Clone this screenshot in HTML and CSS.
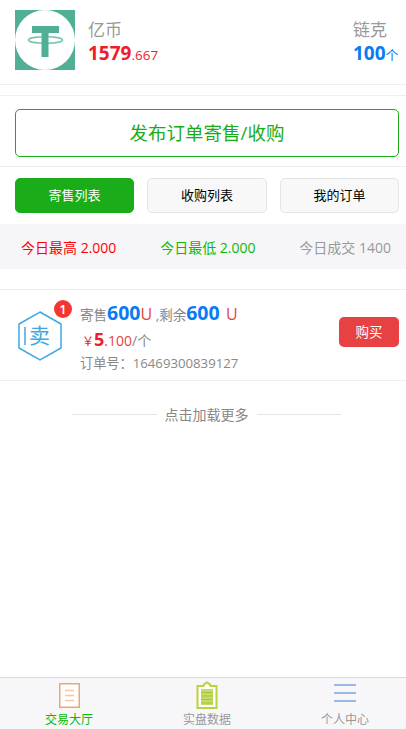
FILE: index.html
```html
<!DOCTYPE html>
<html lang="zh">
<head>
<meta charset="utf-8">
<title>交易大厅</title>
<link rel="stylesheet" href="styles.css">
</head>
<body>
<div class="page">
  <header class="top">
    <svg class="logo" viewBox="0 0 60 60" aria-hidden="true">
      <rect width="60" height="60" fill="#50af95"/>
      <circle cx="30" cy="30" r="30" fill="#fff"/>
      <ellipse cx="30.500" cy="30" rx="17" ry="3.200" fill="none" stroke="#7fc4b1" stroke-width="1.500"/>
      <path d="M17 16h27v7h-10.500v24h-7V23H17z" fill="#50af95"/>
    </svg>
    <div class="coin">
      <div class="label">亿币</div>
      <div class="value red"><b>1579</b><small>.667</small></div>
    </div>
    <div class="chain">
      <div class="label">链克</div>
      <div class="value blue"><b>100</b><small class="unit">个</small></div>
    </div>
  </header>
  <div class="gap"></div>
  <section class="publish-wrap">
    <a class="publish">发布订单寄售/收购</a>
  </section>
  <nav class="tabs">
    <a class="tab active">寄售列表</a>
    <a class="tab">收购列表</a>
    <a class="tab">我的订单</a>
  </nav>
  <section class="stats">
    <span class="st-red">今日最高 2.000</span>
    <span class="st-green">今日最低 2.000</span>
    <span class="st-gray">今日成交 1400</span>
  </section>
  <article class="order">
    <div class="hex-wrap">
      <svg class="hex" viewBox="0 0 44 50" aria-hidden="true">
        <path d="M22 1 43 13V37L22 49 1 37V13z" fill="none" stroke="#3ea9e2" stroke-width="1.500"/>
        <path d="M7 16v18" stroke="#3ea9e2" stroke-width="1.500"/>
      </svg>
      <span class="hex-text">卖</span>
      <span class="badge">1</span>
    </div>
    <div class="info">
      <div class="l1">寄售<b>600</b><span class="u">U</span> ,剩余<b>600</b> <span class="u last">U</span></div>
      <div class="l2"><span class="yen">￥</span><b>5</b><span class="dec">.100</span>/个</div>
      <div class="l3">订单号：16469300839127</div>
    </div>
    <a class="buy">购买</a>
  </article>
  <div class="more"><i></i><span>点击加载更多</span><i></i></div>
  <div class="spacer"></div>
  <footer class="bar">
    <a class="item on">
      <svg class="ic" viewBox="0 0 30 30" aria-hidden="true">
        <rect x="5.750" y="2.750" width="19.500" height="23.500" fill="#fff" stroke="#e8a878" stroke-width="1.500"/>
        <path d="M11 9.500h9M11 14.500h9M11 19.500h9" stroke="#f5c8a0" stroke-width="1.500"/>
      </svg>
      <span>交易大厅</span>
    </a>
    <a class="item">
      <svg class="ic" viewBox="0 0 30 30" aria-hidden="true">
        <path d="M11.500 5 12 3.500 15 1.500 18 3.500 18.500 5h6v22h-19V5z" fill="#fff" stroke="#b9d33c" stroke-width="2"/>
        <path d="M9 8h12v16H9z" fill="#c5dc6a"/>
        <path d="M9 11.500h12M9 15h12M9 18.500h12M9 22h12" stroke="#a9c52f" stroke-width="1"/>
      </svg>
      <span>实盘数据</span>
    </a>
    <a class="item">
      <svg class="ic" viewBox="0 0 30 30" aria-hidden="true">
        <path d="M4 4h22M4 12h22M4 20h22" stroke="#9db8e0" stroke-width="2"/>
      </svg>
      <span>个人中心</span>
    </a>
  </footer>
</div>
</body>
</html>
```

FILE: styles.css
```css
* { box-sizing: border-box; }
html, body { margin: 0; height: 100%; }
body {
  background: #fff;
  font-family: "Open Sans", "Noto Sans CJK SC", sans-serif;
  color: #333;
}
a { display: block; }
.page { display: flex; flex-direction: column; height: 729px; overflow: hidden; }

.top {
  display: flex;
  align-items: flex-start;
  height: 85px;
  padding: 10px 7px 0 15px;
  border-bottom: 1px solid #eee;
}
.logo { width: 60px; height: 60px; flex: none; }
.coin { margin-left: 13px; flex: 1; }
.label { font-size: 17px; line-height: 22px; color: #999; margin-top: 9px; }
.value { line-height: 24px; font-size: 14px; white-space: nowrap; }
.value b { font-size: 19px; font-weight: 700; }
.value small { font-size: 13.500px; }
.value .unit { font-size: 13px; }
.red { color: #f01c2c; }
.blue { color: #0a7bf5; }
.chain { width: 46px; }

.gap { height: 10px; }
.publish-wrap { padding: 13px 7px 9px 15px; border-top: 1px solid #eee; border-bottom: 1px solid #eee; }
.publish {
  height: 48px;
  line-height: 46px;
  border: 1px solid #1aad19;
  border-radius: 5px;
  text-align: center;
  font-size: 18.500px;
  color: #1aad19;
}

.tabs { display: flex; gap: 13.400px; padding: 11px 7px 11px 15px; }
.tab {
  flex: 1;
  height: 35px;
  line-height: 33px;
  border: 1px solid #e5e5e5;
  border-radius: 5px;
  background: #f8f8f8;
  text-align: center;
  font-size: 13px;
  color: #000;
}
.tab.active { background: #1aad19; border-color: #1aad19; color: #fff; }

.stats {
  display: flex;
  justify-content: space-between;
  align-items: center;
  height: 45px;
  padding: 0 15px 0 21px;
  background: #f6f6f8;
  font-size: 14px;
}
.st-red { color: #f00; }
.st-green { color: #09bb07; }
.st-gray { color: #999; }

.order {
  display: flex;
  align-items: center;
  height: 92px;
  margin-top: 20px;
  padding: 0 7px 0 18px;
  border-top: 1px solid #eee;
  border-bottom: 1px solid #eee;
}
.hex-wrap { position: relative; width: 44px; height: 50px; flex: none; margin-top: 2px; }
.hex { width: 44px; height: 50px; display: block; }
.hex-text {
  position: absolute;
  left: 11px;
  top: 10px;
  font-size: 21px;
  line-height: 28px;
  color: #3ea9e2;
}
.badge {
  position: absolute;
  left: 36px;
  top: -11px;
  width: 18px;
  height: 18px;
  border-radius: 50%;
  background: #f43530;
  color: #fff;
  font-size: 13px;
  font-weight: 600;
  line-height: 18px;
  text-align: center;
}
.info { flex: 1; margin-left: 18px; padding-top: 3px; color: #888; font-size: 13.500px; }
.l1 { line-height: 24px; white-space: nowrap; }
.l1 b { font-size: 19.500px; font-weight: 700; color: #0a7bf5; }
.u { font-size: 16px; color: #e64340; }
.u.last { margin-left: 3px; }
.l2 { line-height: 24px; padding-left: 2px; font-size: 14px; }
.l2 b { font-size: 18px; color: #f01c2c; }
.yen { color: #f01c2c; font-size: 12px; }
.dec { color: #e64340; }
.l3 { line-height: 20px; font-size: 13.200px; margin-top: -1px; }
.buy {
  width: 60px;
  height: 30px;
  line-height: 30px;
  border-radius: 5px;
  background: #e84142;
  color: #fff;
  text-align: center;
  font-size: 13.500px;
  flex: none;
  margin-bottom: 6px;
}

.more {
  display: flex;
  align-items: center;
  justify-content: center;
  margin-top: 23px;
  padding: 0 65px 0 72px;
  height: 20px;
  font-size: 14px;
  color: #888;
}
.more i { flex: 1; height: 1px; background: #e5e5e5; }
.more span { padding: 0 8px; }
.spacer { flex: 1; }

.bar {
  display: flex;
  height: 52px;
  border-top: 1px solid #d9d9d9;
  background: #f7f7fa;
  overflow: hidden;
}
.item {
  flex: 0 0 138px;
  display: flex;
  flex-direction: column;
  align-items: center;
  font-size: 12px;
  color: #999;
}
.item.on { color: #09bb07; }
.ic { width: 30px; height: 30px; margin-top: 3px; display: block; }
.item span { line-height: 16px; margin-top: 1px; }
```
